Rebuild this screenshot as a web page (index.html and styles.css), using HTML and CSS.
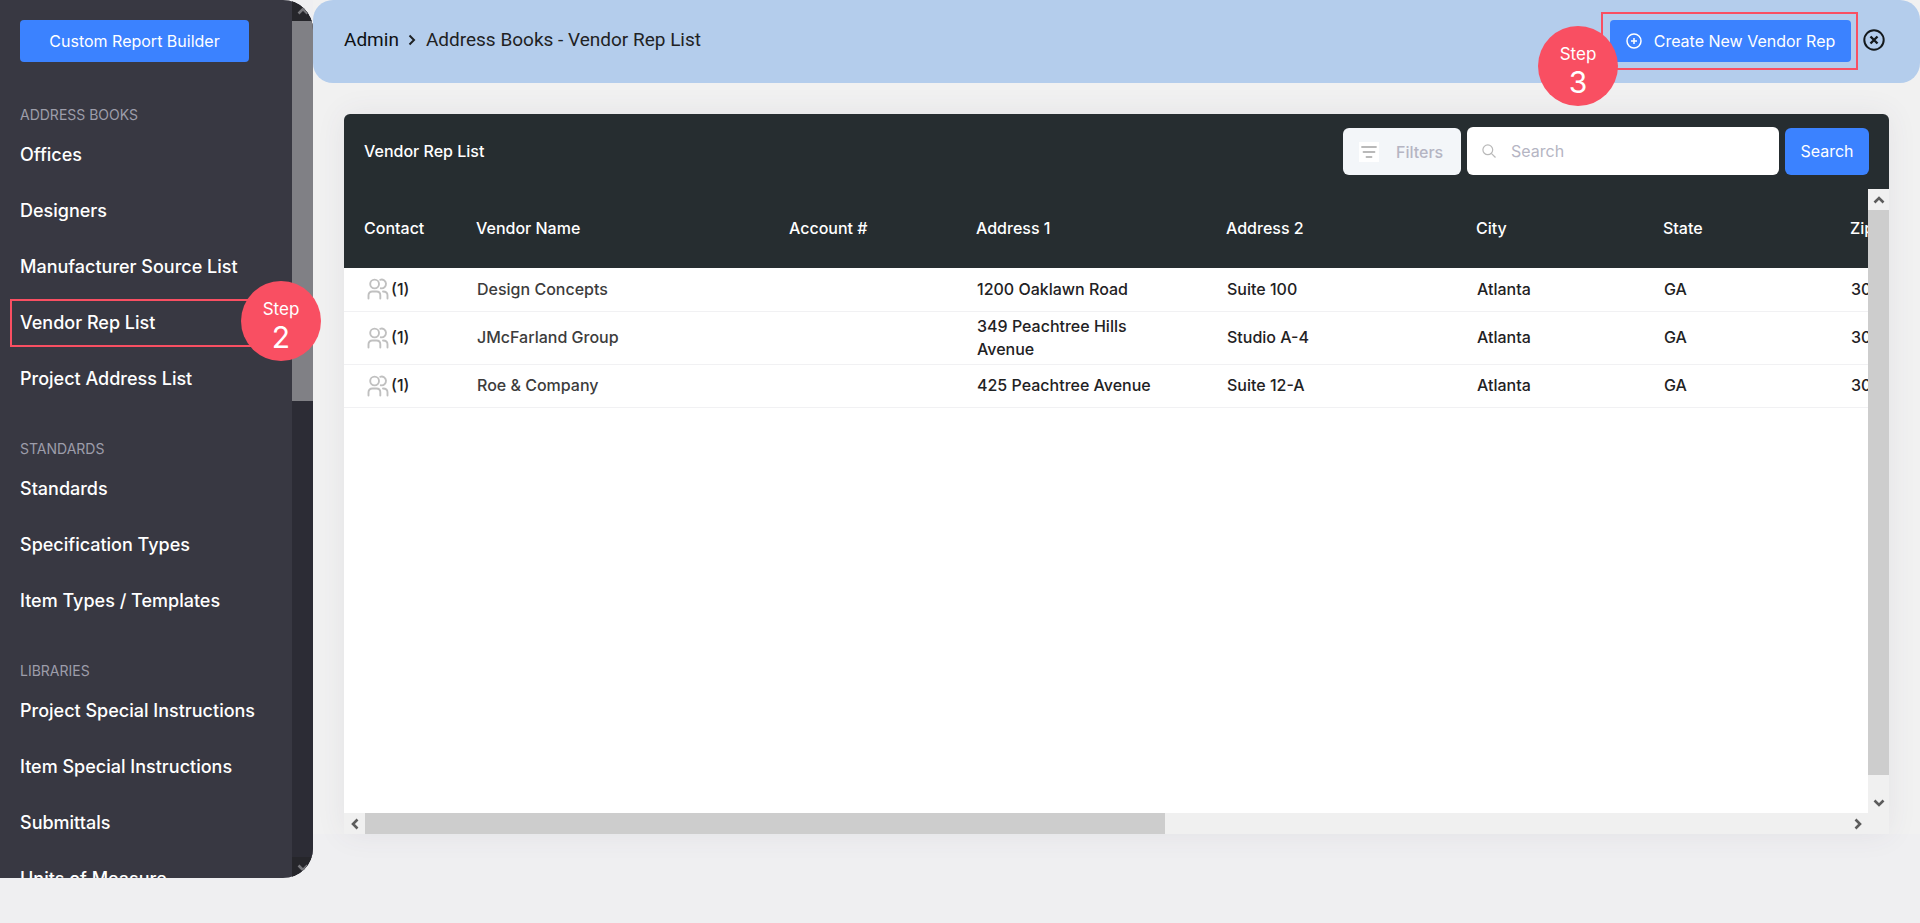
FILE: index.html
```html
<!DOCTYPE html>
<html lang="en">
<head>
<meta charset="utf-8">
<title>Vendor Rep List</title>
<link rel="stylesheet" href="styles.css">
</head>
<body>
<svg class="sprite" aria-hidden="true">
  <symbol id="users" viewBox="0 0 22 22"><g fill="none" stroke="currentColor" stroke-width="1.9" stroke-linecap="round" stroke-linejoin="round"><circle cx="7.600" cy="6" r="4.400"/><path d="M13.200 1.800a4.400 4.400 0 1 1 .6 8.500"/><path d="M1.500 20.500v-3.200c0-2.400 1.600-3.800 3.800-3.800h4.200c2.200 0 3.800 1.400 3.800 3.800v3.200"/><path d="M16 13.500c2.800 0 4.500 1.400 4.500 3.800v3.200"/></g></symbol>
  <symbol id="chev" viewBox="0 0 12 12"><path d="M1.500 8.500 6 4l4.500 4.500" fill="none" stroke="currentColor" stroke-width="2.600"/></symbol>
</svg>
<div class="app">
  <aside class="sidebar">
    <div class="side-scroll">
      <div class="side-content">
        <button class="btn report" type="button">Custom Report Builder</button>
        <nav>
          <h2>ADDRESS BOOKS</h2>
          <ul>
            <li><a href="#">Offices</a></li>
            <li><a href="#">Designers</a></li>
            <li><a href="#">Manufacturer Source List</a></li>
            <li><a href="#">Vendor Rep List</a></li>
            <li><a href="#">Project Address List</a></li>
          </ul>
          <h2>STANDARDS</h2>
          <ul>
            <li><a href="#">Standards</a></li>
            <li><a href="#">Specification Types</a></li>
            <li><a href="#">Item Types / Templates</a></li>
          </ul>
          <h2>LIBRARIES</h2>
          <ul>
            <li><a href="#">Project Special Instructions</a></li>
            <li><a href="#">Item Special Instructions</a></li>
            <li><a href="#">Submittals</a></li>
            <li><a href="#">Units of Measure</a></li>
          </ul>
        </nav>
      </div>
      <div class="bar dark" aria-hidden="true">
        <span class="arrow"><svg><use href="#chev"/></svg></span>
        <span class="track"><span class="thumb"></span></span>
        <span class="arrow down"><svg><use href="#chev"/></svg></span>
      </div>
    </div>
    <div class="mark mark-nav"></div>
    <div class="step step-nav"><span>Step</span><b>2</b></div>
  </aside>
  <main class="main">
    <header class="header">
      <nav class="crumbs">
        <a href="#">Admin</a>
        <svg viewBox="0 0 8 12" aria-hidden="true"><path d="M1.500 1.500 6 6l-4.500 4.500" fill="none" stroke="currentColor" stroke-width="2"/></svg>
        <span>Address Books - Vendor Rep List</span>
      </nav>
      <div class="actions">
        <button class="btn create" type="button">
          <svg viewBox="0 0 16 16" aria-hidden="true"><g fill="none" stroke="currentColor" stroke-width="1.500"><circle cx="8" cy="8" r="7"/><path d="M8 5v6M5 8h6"/></g></svg>
          Create New Vendor Rep
        </button>
        <button class="close" type="button" aria-label="Close">
          <svg viewBox="0 0 22 22"><g fill="none" stroke="currentColor" stroke-width="2"><circle cx="11" cy="11" r="9.700"/><path stroke-width="2.400" d="m7.500 7.500 7 7m0-7-7 7"/></g></svg>
        </button>
        <div class="mark mark-create"></div>
        <div class="step step-create"><span>Step</span><b>3</b></div>
      </div>
    </header>
    <section class="card">
      <div class="toolbar">
        <h1>Vendor Rep List</h1>
        <div class="tools">
          <button class="filters" type="button">
            <svg viewBox="0 0 20 20" aria-hidden="true"><path fill="#fff" d="M0 0h20v20H0z"/><path d="M3 5h14M4.500 10h11M7.500 15h5" stroke="#b9b9b9" stroke-width="1.800" stroke-linecap="round"/></svg>
            Filters
          </button>
          <div class="search">
            <svg viewBox="0 0 14 14" aria-hidden="true"><g fill="none" stroke="currentColor" stroke-width="1.200"><circle cx="5.800" cy="5.800" r="4.900"/><path d="m9.300 9.300 4.200 4.200"/></g></svg>
            <input type="search" placeholder="Search" aria-label="Search vendor reps">
          </div>
          <button class="btn go" type="button">Search</button>
        </div>
      </div>
      <div class="grid">
        <div class="viewport">
          <table>
            <colgroup><col class="c-contact"><col class="c-name"><col class="c-short"><col class="c-addr"><col class="c-addr"><col class="c-short"><col class="c-short"><col></colgroup>
            <thead><tr><th>Contact</th><th>Vendor Name</th><th>Account #</th><th>Address 1</th><th>Address 2</th><th>City</th><th>State</th><th>Zip</th></tr></thead>
            <tbody>
              <tr><td><span class="people"><svg aria-hidden="true"><use href="#users"/></svg>(1)</span></td><td class="name">Design Concepts</td><td></td><td>1200 Oaklawn Road</td><td>Suite 100</td><td>Atlanta</td><td>GA</td><td>30</td></tr>
              <tr><td><span class="people"><svg aria-hidden="true"><use href="#users"/></svg>(1)</span></td><td class="name">JMcFarland Group</td><td></td><td>349 Peachtree Hills Avenue</td><td>Studio A-4</td><td>Atlanta</td><td>GA</td><td>30</td></tr>
              <tr><td><span class="people"><svg aria-hidden="true"><use href="#users"/></svg>(1)</span></td><td class="name">Roe &amp; Company</td><td></td><td>425 Peachtree Avenue</td><td>Suite 12-A</td><td>Atlanta</td><td>GA</td><td>30</td></tr>
            </tbody>
          </table>
        </div>
        <div class="bar" aria-hidden="true">
          <span class="arrow"><svg><use href="#chev"/></svg></span>
          <span class="track"><span class="thumb"></span></span>
          <span class="arrow down"><svg><use href="#chev"/></svg></span>
        </div>
        <div class="bar across" aria-hidden="true">
          <span class="arrow left"><svg><use href="#chev"/></svg></span>
          <span class="track"><span class="thumb"></span></span>
          <span class="arrow right"><svg><use href="#chev"/></svg></span>
        </div>
        <div class="corner"></div>
      </div>
    </section>
  </main>
</div>
</body>
</html>
```

FILE: styles.css
```css
* { box-sizing: border-box; }
body {
  margin: 0;
  min-height: 100vh;
  background: #efeff1;
  color: #1f2224;
  font-family: Inter, "Liberation Sans", sans-serif;
  font-size: 16px;
  overflow: hidden;
}
h1, h2, ul { margin: 0; padding: 0; }
ul { list-style: none; }
a { color: inherit; text-decoration: none; }
button, input { font: inherit; }
button { border: 0; padding: 0; cursor: pointer; }
svg { display: block; flex: none; }
.sprite { position: absolute; width: 0; height: 0; }

.app { display: flex; align-items: flex-start; }

/* Sidebar */
.sidebar { position: relative; z-index: 1; flex: none; width: 313px; }
.side-scroll {
  display: flex;
  height: calc(100vh - 45px);
  overflow: hidden;
  border-radius: 0 30px 30px 0;
  background: #383842;
}
.side-content { flex: 1; padding: 20px; overflow: hidden; }
.btn {
  display: flex;
  align-items: center;
  justify-content: center;
  height: 42px;
  border-radius: 4px;
  background: #3b82ff;
  color: #fff;
}
.report { width: 229px; margin-bottom: 11px; }
.sidebar h2 {
  padding: 32px 0 2px;
  color: #9d9daa;
  font-size: 14px;
  line-height: 20px;
  font-weight: 400;
}
.sidebar li a {
  display: block;
  color: #fff;
  font-size: 18px;
  line-height: 56px;
  font-weight: 500;
  white-space: nowrap;
}

/* Scrollbars */
.bar { display: flex; flex-direction: column; flex: none; width: 21px; background: #f0f0f0; color: #5c5c5c; }
.arrow { display: grid; place-items: center; flex: none; width: 21px; height: 21px; }
.arrow svg { width: 12px; height: 12px; }
.down svg { transform: rotate(180deg); }
.left svg { transform: rotate(-90deg); }
.right svg { transform: rotate(90deg); }
.track { display: block; flex: 1; }
.thumb { display: block; height: 97%; background: #cdcdcd; }
.across { flex-direction: row; width: auto; height: 21px; }
.across .thumb { width: 54%; height: 21px; }
.dark { background: #2c2c35; color: #77777c; }
.dark .arrow { background: #26262b; }
.dark .thumb { height: calc(45% + 4px); background: #808085; }
.corner { background: #f0f0f0; }

/* Step markers */
.mark { position: absolute; border: 2px solid #f94f62; pointer-events: none; }
.step {
  position: absolute;
  display: flex;
  flex-direction: column;
  align-items: center;
  width: 80px;
  height: 80px;
  padding-top: 18px;
  border-radius: 50%;
  background: #f94f62;
  color: #fff;
  font-size: 17px;
  line-height: 20px;
}
.step b { font-size: 30px; line-height: 36px; font-weight: 400; }
.mark-nav { top: 299px; left: 10px; width: 260px; height: 48px; }
.step-nav { top: 281px; left: 241px; }
.mark-create { top: -8px; left: -9px; width: 257px; height: 58px; }
.step-create { top: 6px; left: -72px; }

/* Main area */
.main {
  display: flex;
  flex-direction: column;
  flex: 1;
  min-width: 0;
  height: calc(100vh - 89px);
  background: #f1f1f1;
}
.header {
  display: flex;
  justify-content: space-between;
  align-items: flex-start;
  height: 83px;
  padding: 20px 35px 0 31px;
  border-radius: 20px;
  background: #b4cdec;
}
.crumbs { display: flex; align-items: center; height: 39px; font-family: Roboto, sans-serif; font-size: 19px; }
.crumbs a { color: #0e1114; }
.crumbs svg { width: 8px; height: 12px; margin: 0 10px 0 9px; }
.actions { position: relative; display: flex; gap: 12px; }
.create { gap: 12px; width: 241px; }
.create svg { width: 16px; height: 16px; }
.close { height: 40px; background: none; color: #14191c; }
.close svg { width: 22px; height: 22px; }

.card {
  display: flex;
  flex-direction: column;
  flex: 1;
  min-height: 0;
  margin: 31px 31px 0;
  border-radius: 6px 6px 0 0;
  background: #262d30;
  box-shadow: 0 0 30px rgba(82, 63, 105, 0.08);
}
.toolbar {
  display: flex;
  justify-content: space-between;
  align-items: center;
  height: 75px;
  padding: 0 20px 2px;
  color: #fff;
}
.toolbar h1 { font-size: 16px; font-weight: 500; }
.tools { display: flex; align-items: flex-end; gap: 6px; }
.filters {
  display: flex;
  align-items: center;
  gap: 17px;
  width: 118px;
  height: 47px;
  padding: 2px 0 0 16px;
  border-radius: 6px;
  background: #f3f6f9;
  color: #b5b5c3;
  font-weight: 500;
}
.filters svg { width: 20px; height: 20px; }
.search {
  display: flex;
  align-items: center;
  gap: 15px;
  width: 312px;
  height: 48px;
  padding: 0 15px;
  border-radius: 6px;
  background: #fff;
  color: #b9b9b9;
}
.search svg { width: 14px; height: 14px; }
.search input { flex: 1; min-width: 0; padding: 0; border: 0; outline: 0; background: none; color: #1f2224; }
.search input::placeholder { color: #b5b5c3; }
.go { width: 84px; height: 47px; border-radius: 6px; }

.grid { display: grid; grid-template: minmax(0, 1fr) 21px / minmax(0, 1fr) 21px; flex: 1; min-height: 0; }
.viewport { overflow: hidden; background: #fff; }
table { width: 2820px; table-layout: fixed; border-collapse: collapse; }
.c-contact { width: 112px; }
.c-name { width: 313px; }
.c-short { width: 187px; }
.c-addr { width: 250px; }
th {
  height: 79px;
  padding: 0 20px 2px;
  background: #262d30;
  color: #fff;
  font-weight: 500;
  text-align: left;
}
td { height: 43px; padding: 3px 21px; border-bottom: 1px solid #f1f1f3; line-height: 23px; font-weight: 500; }
td.name { color: #3c3c3c; }
.people { display: flex; align-items: center; gap: 2px; padding-left: 2px; }
.people svg { width: 22px; height: 22px; color: #c0c0c0; }
```
